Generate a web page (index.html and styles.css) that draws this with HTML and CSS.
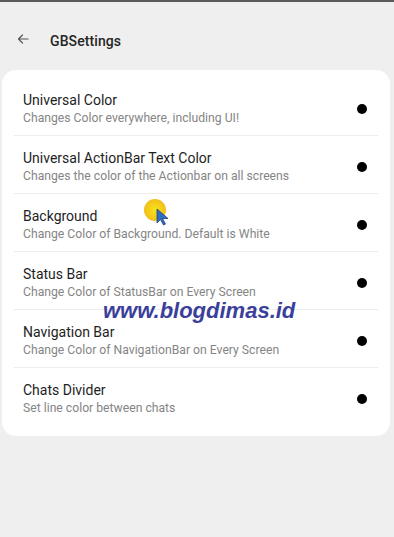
FILE: index.html
```html
<!DOCTYPE html>
<html>
<head>
<meta charset="utf-8">
<link rel="stylesheet" href="styles.css">
</head>
<body>
<div class="screen">
  <div class="topline"></div>
  <div class="statusbar"></div>
  <header class="appbar">
    <svg class="back" width="12" height="12" viewBox="0 0 12 12"><path d="M11 6H1.5M5.5 2L1.5 6l4 4" fill="none" stroke="#555" stroke-width="1.2" stroke-linecap="round" stroke-linejoin="round"/></svg>
    <span class="title">GBSettings</span>
  </header>
  <main class="card">
    <div class="row">
      <div class="texts"><div class="t">Universal Color</div><div class="s">Changes Color everywhere, including UI!</div></div>
      <span class="dot"></span>
    </div>
    <div class="row">
      <div class="texts"><div class="t">Universal ActionBar Text Color</div><div class="s">Changes the color of the Actionbar on all screens</div></div>
      <span class="dot"></span>
    </div>
    <div class="row">
      <div class="texts"><div class="t">Background</div><div class="s">Change Color of Background. Default is White</div></div>
      <span class="dot"></span>
    </div>
    <div class="row">
      <div class="texts"><div class="t">Status Bar</div><div class="s">Change Color of StatusBar on Every Screen</div></div>
      <span class="dot"></span>
    </div>
    <div class="row">
      <div class="texts"><div class="t">Navigation Bar</div><div class="s">Change Color of NavigationBar on Every Screen</div></div>
      <span class="dot"></span>
    </div>
    <div class="row">
      <div class="texts"><div class="t">Chats Divider</div><div class="s">Set line color between chats</div></div>
      <span class="dot"></span>
    </div>
  </main>
  <div class="watermark">www.blogdimas.id</div>
  <div class="cursor">
    <span class="halo"></span>
    <svg class="arrow" width="14" height="18" viewBox="0 0 14 18"><path d="M1 1L1 15L4.5 11.5L7.5 17L9.5 16L6.5 10.5L12 10.5Z" fill="#2f6fc0" stroke="#1d3f80" stroke-width="0.8" stroke-linejoin="round"/></svg>
  </div>
</div>
</body>
</html>
```
FILE: styles.css
```css
* { box-sizing: border-box; }
html, body { margin: 0; padding: 0; }
body {
  background: #efefef;
  font-family: Roboto, "Liberation Sans", sans-serif;
}
.screen {
  position: relative;
  width: 394px;
  height: 537px;
  overflow: hidden;
  background: #efefef;
}
.topline {
  height: 2px;
  background: #5a5a5a;
}
.statusbar {
  height: 12px;
}
.appbar {
  height: 54px;
  display: flex;
  align-items: center;
  padding-left: 17px;
  padding-top: 1px;
  padding-bottom: 2px;
}
.back { margin-right: 21px; margin-top: -3px; }
.title {
  font-size: 14px;
  font-weight: 500;
  color: #262626;
  letter-spacing: 0.1px;
}
.card {
  margin: 2px 4px 0 2px;
  background: #fff;
  border-radius: 14px;
  padding: 8px 12px 10px 12px;
}
.row {
  height: 58px;
  display: flex;
  align-items: center;
  padding: 5px 0 0 9px;
  border-bottom: 1px solid #ededed;
}
.row:last-child { border-bottom: none; }
.texts { flex: 1; }
.t {
  font-size: 14px;
  color: #1e1e1e;
  line-height: 17px;
}
.s {
  font-size: 12.2px;
  color: #858585;
  line-height: 17px;
  margin-top: 1px;
}
.dot {
  width: 10px;
  height: 10px;
  border-radius: 50%;
  background: #000;
  margin-right: 11px;
  margin-top: -1px;
}
.watermark {
  position: absolute;
  left: 103px;
  top: 298px;
  font-family: "Liberation Sans", sans-serif;
  font-weight: bold;
  font-style: italic;
  font-size: 22px;
  color: #3b3f9c;
}
.cursor {
  position: absolute;
  left: 144px;
  top: 199px;
  width: 30px;
  height: 30px;
}
.halo {
  position: absolute;
  left: 0;
  top: 0;
  width: 22px;
  height: 22px;
  border-radius: 50%;
  background: radial-gradient(circle, #f7e21a 0%, #f3c51a 60%, #eaa640 100%);
}
.arrow {
  position: absolute;
  left: 12px;
  top: 9px;
}
```
